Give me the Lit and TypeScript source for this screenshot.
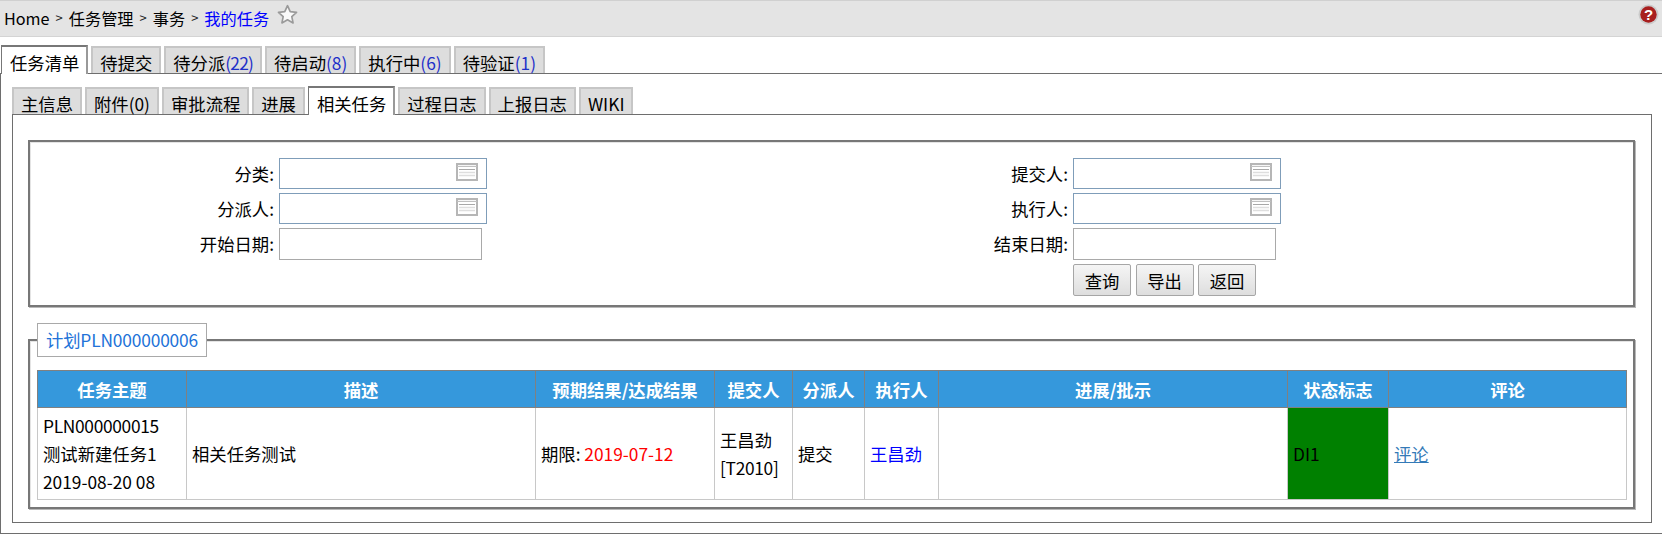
import { LitElement, html, css } from "lit";
import { customElement } from "lit/decorators.js";

const calIcon = html`<svg class="cal" width="22" height="18" viewBox="0 0 22 18">
  <rect x="1" y="1" width="20" height="16" fill="#f6f6f6" stroke="#b6b6b6" stroke-width="2"/>
  <rect x="2" y="4" width="18" height="12" fill="#fff"/>
  <path d="M1 3.5H21" stroke="#c0c0c0" stroke-width="1"/>
  <path d="M3 6.5H19" stroke="#a8a8a8" stroke-width="1"/>
  <path d="M3 9.5H19M3 12.5H19" stroke="#dedede" stroke-width="1.5"/>
</svg>`;

const cols = [149, 349, 179, 78, 72, 74, 349, 101, 238];
const heads = ["任务主题", "描述", "预期结果/达成结果", "提交人", "分派人", "执行人", "进展/批示", "状态标志", "评论"];

@customElement("app-root")
export class AppRoot extends LitElement {
  static styles = css`
    :host { display: block; font-family: "Noto Sans CJK SC", "Noto Sans", sans-serif; font-size: 17.33px; color: #000; background: #fff; }
    .bar { height: 37px; box-sizing: border-box; background: #e4e4e4; border-top: 1px solid #d0d0d0; border-bottom: 1px solid #d4d4d4; display: flex; align-items: center; padding: 0 3px 2px 4px; }
    .crumb { display: flex; align-items: center; gap: 6px; font-size: 16.2px; line-height: 20px; }
    .sep { font-size: 13px; color: #222; }
    .cur { color: #0000ff; }
    .star { margin: -6px 0 0 8px; }
    .help { margin-left: auto; margin-top: -7px; }
    .help text { font: bold 15px "Liberation Sans", sans-serif; fill: #fff; }

    .tabs { display: flex; gap: 3px; align-items: flex-end; line-height: 22px; }
    .tab { box-sizing: border-box; height: 27px; padding: 4px 7px 0; background: #dddddd; border: 2px solid #c6c6c6; border-bottom: none; white-space: nowrap; text-align: center; }
    .tab.on { background: #fff; border: 1px solid #777; border-width: 2px 2px 0 1px; border-color: #777 #999 #777 #777; height: 29px; position: relative; z-index: 1; margin-bottom: -1px; padding: 5px 7px 0 8px; }
    .n { color: #1f30c9; }
    .tight { letter-spacing: -0.8px; }
    .top-tabs { margin: 8px 0 0 1px; }
    .outer { box-sizing: border-box; border: 1px solid #6e6e6e; border-right: none; padding: 12px 10px 11px 11px; height: 461px; }
    .inner { box-sizing: border-box; border: 1px solid #6e6e6e; height: 409px; padding: 25px 16px 0 15px; }

    fieldset { margin: 0; min-width: 0; box-sizing: border-box; border: 2px solid #777; box-shadow: 1px 1px 0 #b8b8b8, inset 1px 1px 0 #e4e4e4; }
    .query { padding: 16px 0 8px 0; height: 167px; }
    .form { display: grid; grid-template-columns: 249px 544px 250px 1fr; row-gap: 4px; }
    .lab { text-align: right; padding-right: 5px; line-height: 31px; }
    .inp { box-sizing: border-box; height: 31px; display: flex; align-items: center; justify-content: flex-end; padding: 0 8px 3px 0; background: #fff; }
    .lookup { width: 208px; border: 1px solid #7f9db9; }
    .date { width: 203px; height: 32px; border: 1px solid #a9a9a9; }
    .btns { display: flex; gap: 4.5px; }
    button { box-sizing: border-box; width: 58px; height: 32px; padding: 0; font: inherit; color: #000; border: 1px solid #a6a6a6; border-radius: 2px; background: linear-gradient(#f5f5f5, #dedede); }

    .plan { margin-top: 16px; padding: 13px 7px 7px 7px; }
    legend { padding: 0 8px; box-sizing: border-box; height: 34px; line-height: 32px; border: 1px solid #a9a9a9; background: #fff; color: #2272d8; margin-left: 0; letter-spacing: -0.15px; }
    table { border-collapse: collapse; table-layout: fixed; width: 1589px; }
    th { background: #3598dc; color: #fff; border: 1px solid #808080; font-weight: bold; height: 36px; padding: 0; }
    td { border: 1px solid #c8c8c8; padding: 0 5px; height: 91px; line-height: 28px; }
    .c1 { white-space: nowrap; overflow: hidden; }
    .lat { letter-spacing: -0.3px; }
    .red { color: #ff0000; }
    .blue { color: #0000ff; }
    .green { background: #008000; }
    a { color: #337ab7; text-decoration: underline; }
  `;

  render() {
    return html`
      <div class="bar">
        <div class="crumb">
          <span>Home</span><span class="sep">&gt;</span><span>任务管理</span><span class="sep">&gt;</span><span>事务</span><span class="sep">&gt;</span><span class="cur">我的任务</span>
        </div>
        <svg class="star" width="21" height="21" viewBox="0 0 20 20"><path d="M10 1.6l2.6 5.6 6 .7-4.5 4.1 1.2 6-5.3-3-5.3 3 1.2-6-4.5-4.1 6-.7z" fill="#fafafa" stroke="#9a9a9a" stroke-width="1.6" stroke-linejoin="round"/></svg>
        <svg class="help" width="21" height="21" viewBox="0 0 21 21"><circle cx="10.5" cy="10.5" r="10" fill="#cbcbcb"/><circle cx="10.5" cy="10.5" r="8.2" fill="#a81f1f"/><text x="10.5" y="16" text-anchor="middle">?</text></svg>
      </div>
      <div class="tabs top-tabs">
        <div class="tab on">任务清单</div>
        <div class="tab">待提交</div>
        <div class="tab">待分派<span class="n tight">(22)</span></div>
        <div class="tab">待启动<span class="n">(8)</span></div>
        <div class="tab">执行中<span class="n">(6)</span></div>
        <div class="tab">待验证<span class="n">(1)</span></div>
      </div>
      <div class="outer">
        <div class="tabs">
          <div class="tab">主信息</div>
          <div class="tab">附件(0)</div>
          <div class="tab">审批流程</div>
          <div class="tab">进展</div>
          <div class="tab on">相关任务</div>
          <div class="tab">过程日志</div>
          <div class="tab">上报日志</div>
          <div class="tab">WIKI</div>
        </div>
        <div class="inner">
          <fieldset class="query">
            <div class="form">
              <div class="lab">分类:</div><div class="inp lookup">${calIcon}</div>
              <div class="lab">提交人:</div><div class="inp lookup">${calIcon}</div>
              <div class="lab">分派人:</div><div class="inp lookup">${calIcon}</div>
              <div class="lab">执行人:</div><div class="inp lookup">${calIcon}</div>
              <div class="lab">开始日期:</div><div class="inp date"></div>
              <div class="lab">结束日期:</div><div class="inp date"></div>
              <div></div><div></div><div></div>
              <div class="btns"><button>查询</button><button>导出</button><button>返回</button></div>
            </div>
          </fieldset>
          <fieldset class="plan">
            <legend>计划PLN000000006</legend>
            <table>
              <colgroup>${cols.map((w) => html`<col style="width:${w}px" />`)}</colgroup>
              <thead><tr>${heads.map((h) => html`<th>${h}</th>`)}</tr></thead>
              <tbody>
                <tr>
                  <td class="c1"><span class="lat">PLN000000015</span><br />测试新建任务1<br />2019-08-20 08</td>
                  <td>相关任务测试</td>
                  <td>期限: <span class="red">2019-07-12</span></td>
                  <td>王昌劲<br /><span class="lat">[T2010]</span></td>
                  <td>提交</td>
                  <td class="blue">王昌劲</td>
                  <td></td>
                  <td class="green">DI1</td>
                  <td><a href="#">评论</a></td>
                </tr>
              </tbody>
            </table>
          </fieldset>
        </div>
      </div>
    `;
  }
}
